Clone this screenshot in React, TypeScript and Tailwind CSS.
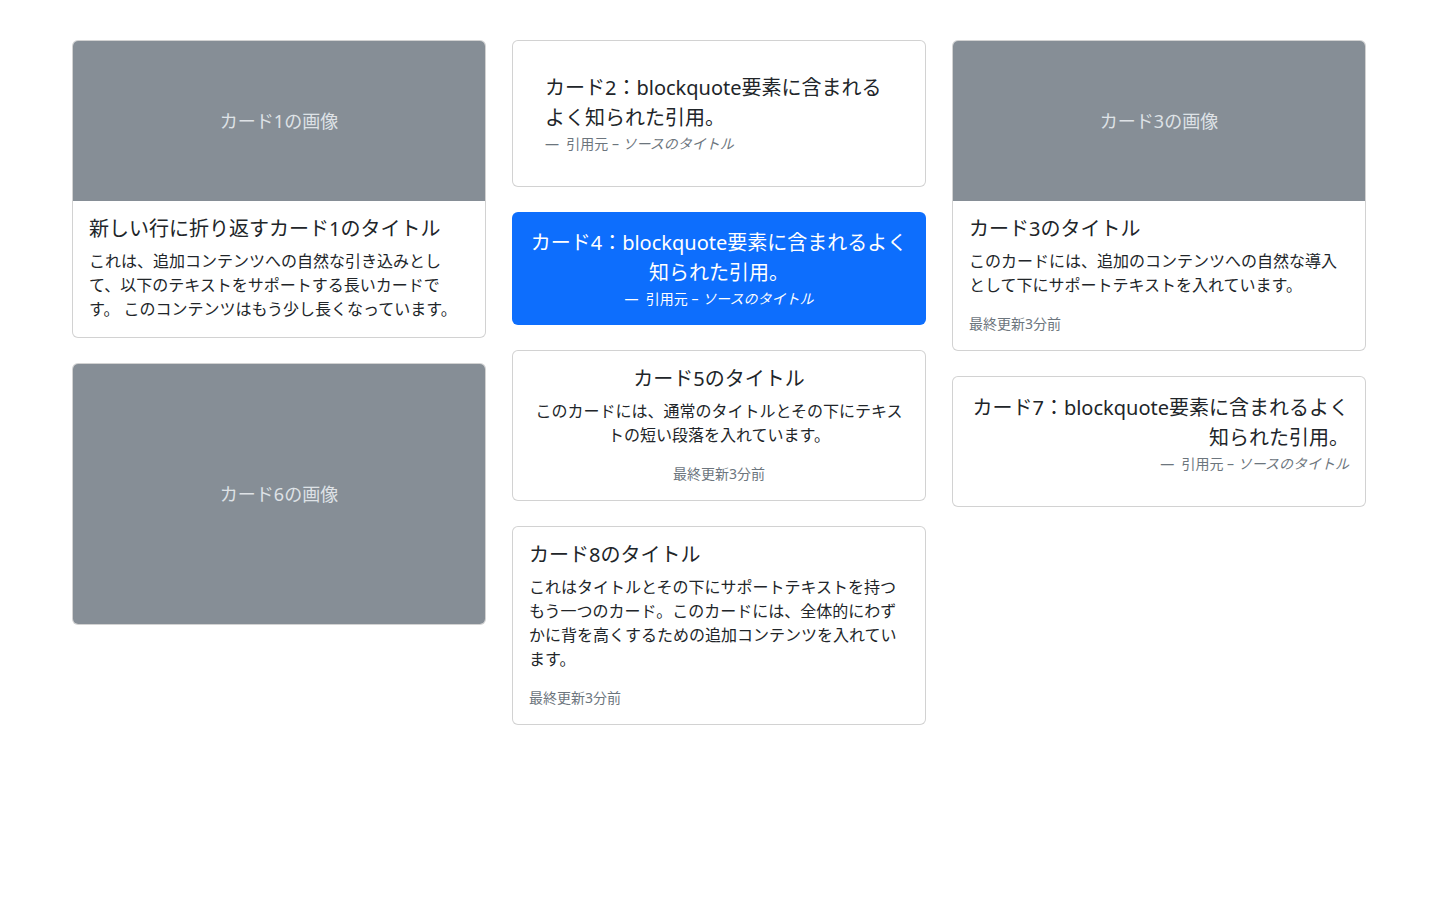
export default function App() {
  const font = { fontFamily: '"Segoe UI", "Noto Sans", "Noto Sans CJK JP", sans-serif' };
  const card = "border border-[rgba(0,0,0,0.175)] rounded-[6px] bg-white overflow-hidden";
  const title = "text-[20px] leading-[24px] text-[#212529] mb-2";
  const txt = "text-[16px] leading-[24px] text-[#212529]";
  const muted = "text-[14px] leading-[21px] text-[#6c757d]";
  const Img = ({ h, label }: { h: string; label: string }) => (
    <div className={`${h} bg-[#868e96] flex items-center justify-center text-[#dee2e6] text-[18px]`}>{label}</div>
  );
  const Footer = ({ white }: { white?: boolean }) => (
    <div className={`text-[14px] leading-[21px] ${white ? "text-white" : "text-[#6c757d]"}`}>
      —&nbsp; 引用元 – <i>ソースのタイトル</i>
    </div>
  );
  return (
    <div style={font} className="w-[1440px] h-[900px] bg-white">
      <div className="pt-10 ml-[72px] w-[1294px] grid grid-cols-3 gap-[26px] items-start">
        <div className="flex flex-col gap-[25px]">
          <div className={card}>
            <Img h="h-[160px]" label="カード1の画像" />
            <div className="p-4">
              <div className={title}>新しい行に折り返すカード1のタイトル</div>
              <p className={txt}>これは、追加コンテンツへの自然な引き込みとして、以下のテキストをサポートする長いカードです。 このコンテンツはもう少し長くなっています。</p>
            </div>
          </div>
          <div className={card}>
            <Img h="h-[260px]" label="カード6の画像" />
          </div>
        </div>
        <div className="flex flex-col gap-[25px]">
          <div className={`${card} p-8`}>
            <div className="text-[20px] leading-[30px] text-[#212529]">カード2：blockquote要素に含まれるよく知られた引用。</div>
            <Footer />
          </div>
          <div className="rounded-[6px] bg-[#0d6efd] p-4 text-center">
            <div className="text-[20px] leading-[30px] text-white">カード4：blockquote要素に含まれるよく知られた引用。</div>
            <Footer white />
          </div>
          <div className={`${card} p-4 text-center`}>
            <div className={title}>カード5のタイトル</div>
            <p className={`${txt} mb-4`}>このカードには、通常のタイトルとその下にテキストの短い段落を入れています。</p>
            <p className={muted}>最終更新3分前</p>
          </div>
          <div className={`${card} p-4`}>
            <div className={title}>カード8のタイトル</div>
            <p className={`${txt} mb-4`}>これはタイトルとその下にサポートテキストを持つもう一つのカード。このカードには、全体的にわずかに背を高くするための追加コンテンツを入れています。</p>
            <p className={muted}>最終更新3分前</p>
          </div>
        </div>
        <div className="flex flex-col gap-[25px]">
          <div className={card}>
            <Img h="h-[160px]" label="カード3の画像" />
            <div className="p-4">
              <div className={title}>カード3のタイトル</div>
              <p className={`${txt} mb-4`}>このカードには、追加のコンテンツへの自然な導入として下にサポートテキストを入れています。</p>
              <p className={muted}>最終更新3分前</p>
            </div>
          </div>
          <div className={`${card} p-4 pb-8 text-right`}>
            <div className="text-[20px] leading-[30px] text-[#212529]">カード7：blockquote要素に含まれるよく知られた引用。</div>
            <Footer />
          </div>
        </div>
      </div>
    </div>
  );
}
